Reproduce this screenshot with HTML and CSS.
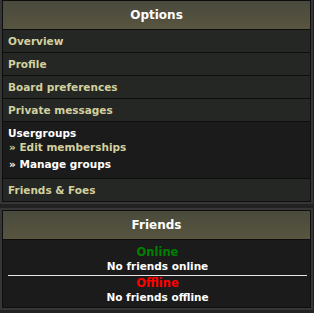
FILE: index.html
```html
<!DOCTYPE html>
<html lang="en">
<head>
    <meta charset="UTF-8">
    <title>User Control Panel</title>
    <link rel="stylesheet" href="styles.css">
</head>
<body>
    <div class="panel">
        <div class="panel-inner">
            <div class="panel-head">Options</div>
            <a class="menu-row" href="#">Overview</a>
            <a class="menu-row" href="#">Profile</a>
            <a class="menu-row" href="#">Board preferences</a>
            <a class="menu-row" href="#">Private messages</a>
            <div class="menu-group">
                <div class="group-title">Usergroups</div>
                <a class="sub-link" href="#">&raquo; Edit memberships</a>
                <a class="sub-link active" href="#">&raquo; Manage groups</a>
            </div>
            <a class="menu-row" href="#">Friends &amp; Foes</a>
        </div>
    </div>

    <div class="panel">
        <div class="panel-inner">
            <div class="panel-head">Friends</div>
            <div class="friends-body">
                <div class="status online">Online</div>
                <div class="status-note">No friends online</div>
                <hr class="divider">
                <div class="status offline">Offline</div>
                <div class="status-note">No friends offline</div>
            </div>
        </div>
    </div>
</body>
</html>
```

FILE: styles.css
```css
* { margin: 0; padding: 0; box-sizing: border-box; }
:root {
    --page: #222222; --frame: #363636; --line: #0e0e0e;
    --row: #252724; --deep: #1b1b1b;
    --link: #d3d09f; --text: #ffffff;
}
body { background: var(--page); font-family: "DejaVu Sans", Verdana, sans-serif; font-size: 10.5px; font-weight: bold; color: var(--text); }
.panel { width: 313px; border: 2px solid var(--frame); border-top-width: 0; margin-bottom: 4px; }
.panel + .panel { border-top-width: 2px; }
.panel-inner { border: 1px solid var(--line); background: var(--line); display: flex; flex-direction: column; gap: 1px; }
.panel-head { height: 28px; display: flex; align-items: center; justify-content: center; font-size: 12px; color: var(--text); background: linear-gradient(180deg, #4a4a3d, #58553f); }
.menu-row { height: 22px; display: flex; align-items: center; padding-left: 5px; background: var(--row); color: var(--link); text-decoration: none; }
.menu-group { height: 56px; background: var(--deep); padding: 5px 0 0 5px; display: flex; flex-direction: column; }
.group-title { line-height: 13px; }
.sub-link { line-height: 14px; color: var(--link); text-decoration: none; padding-left: 1px; }
.sub-link + .sub-link { margin-top: 3px; }
.sub-link.active { color: var(--text); }
.friends-body { background: var(--deep); padding: 5px 3px 3px 5px; text-align: center; }
.status { font-size: 11.5px; line-height: 14px; }
.status-note { line-height: 14px; }
.online { color: #008000; }
.offline { color: #ff0000; }
.divider { border: 0; border-top: 1px solid #e6e6e6; margin: 2px 0 0; }
```
